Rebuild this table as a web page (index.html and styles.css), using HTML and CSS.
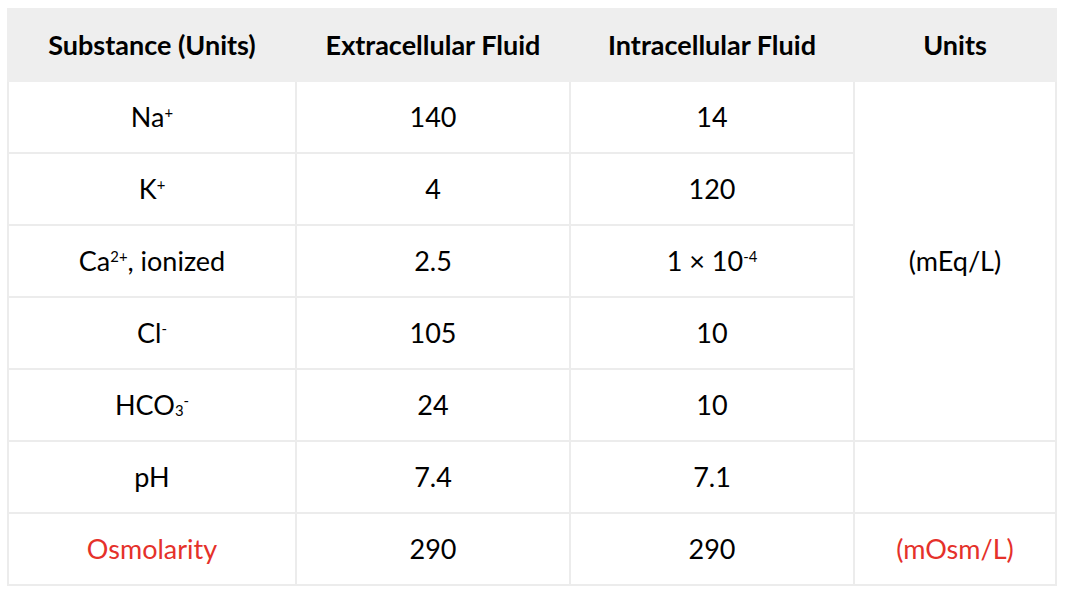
FILE: index.html
```html
<!DOCTYPE html>
<html>
<head>
<meta charset="utf-8">
<link rel="stylesheet" href="styles.css">
</head>
<body>
<table class="fluid-table">
  <colgroup>
    <col class="c1"><col class="c2"><col class="c3"><col class="c4">
  </colgroup>
  <thead>
    <tr>
      <th>Substance (Units)</th>
      <th>Extracellular Fluid</th>
      <th>Intracellular Fluid</th>
      <th>Units</th>
    </tr>
  </thead>
  <tbody>
    <tr><td>Na<sup>+</sup></td><td>140</td><td>14</td><td rowspan="5">(mEq/L)</td></tr>
    <tr><td>K<sup>+</sup></td><td>4</td><td>120</td></tr>
    <tr><td>Ca<sup>2+</sup>, ionized</td><td>2.5</td><td>1 × 10<sup>-4</sup></td></tr>
    <tr><td>Cl<sup>-</sup></td><td>105</td><td>10</td></tr>
    <tr><td>HCO<sub>3</sub><sup>-</sup></td><td>24</td><td>10</td></tr>
    <tr><td>pH</td><td>7.4</td><td>7.1</td><td></td></tr>
    <tr><td class="red">Osmolarity</td><td>290</td><td>290</td><td class="red">(mOsm/L)</td></tr>
  </tbody>
</table>
</body>
</html>
```

FILE: styles.css
```css
html, body {
  margin: 0;
  background: #ffffff;
}
body {
  padding: 8px 10px 0 7px;
  font-family: Lato, "Open Sans", sans-serif;
  color: #000;
}
.fluid-table {
  width: 1048px;
  border-collapse: collapse;
  table-layout: fixed;
  border: 2px solid #ececec;
}
.c1 { width: 288px; }
.c2 { width: 274px; }
.c3 { width: 284px; }
.c4 { width: 202px; }
th, td {
  border: 2px solid #ececec;
  text-align: center;
  vertical-align: middle;
  height: 70px;
  padding: 0;
  font-size: 27px;
  line-height: 1.2;
}
th {
  background: #eeeeee;
  font-weight: 700;
  border-color: #eeeeee;
}
sup, sub {
  font-size: 55%;
  line-height: 0;
}
sup { vertical-align: 0.6em; }
sub { vertical-align: -0.1em; }
.red { color: #e5312a; }
```
